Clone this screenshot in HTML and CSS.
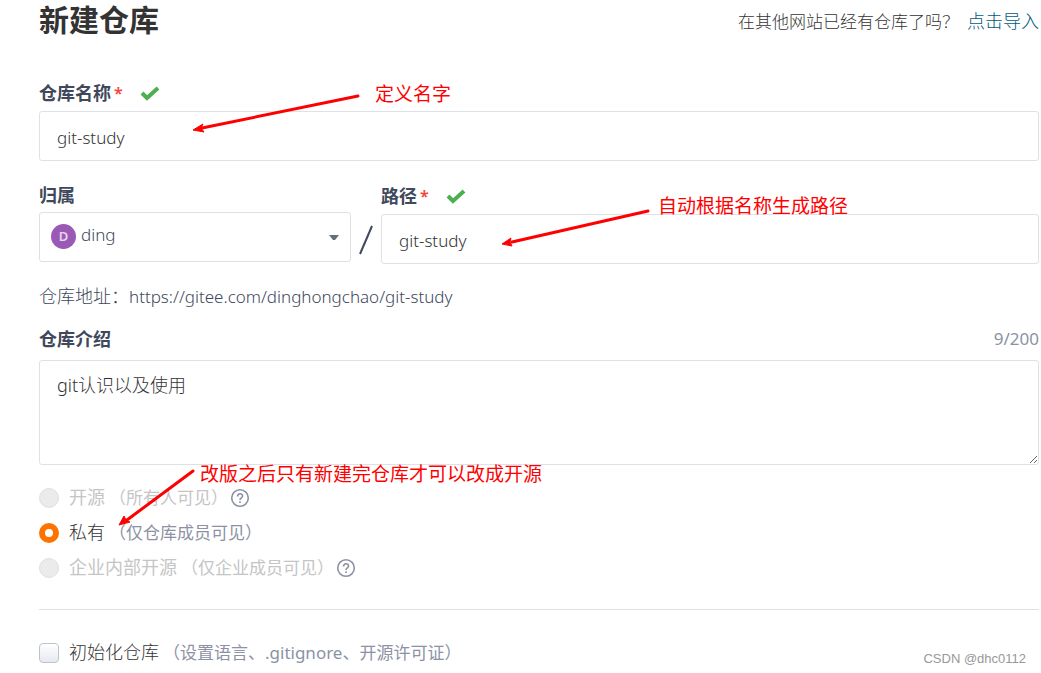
FILE: index.html
```
<!DOCTYPE html>
<html lang="zh-CN">

<head>
    <meta charset="UTF-8">
    <meta name="viewport" content="width=device-width, initial-scale=1.0">
    <title>新建仓库</title>
    <link rel="stylesheet" href="styles.css">
</head>

<body>
    <div class="container">
        <header>
            <h1>新建仓库</h1>
            <p class="import">在其他网站已经有仓库了吗？<a href="#import">点击导入</a></p>
        </header>

        <form>
            <!-- 仓库名称 -->
            <div class="field">
                <div class="label-row">
                    <label for="name">仓库名称</label>
                    <span class="required">*</span>
                    <svg class="check" viewBox="0 0 20 16"><path d="M2 8 L7 13 L18 3"/></svg>
                </div>
                <input type="text" id="name" name="name" value="git-study">
            </div>

            <!-- 归属 / 路径 -->
            <div class="path-row">
                <div class="owner">
                    <div class="label-row">
                        <label for="owner">归属</label>
                    </div>
                    <div class="select-box">
                        <span class="avatar">D</span>
                        <select id="owner" name="owner">
                            <option>ding</option>
                        </select>
                        <svg class="caret" viewBox="0 0 10 6"><path d="M0 0 H10 L6 5 H4 Z"/></svg>
                    </div>
                </div>
                <svg class="slash" viewBox="0 0 14 30"><path d="M1 29 L13 1"/></svg>
                <div class="path">
                    <div class="label-row">
                        <label for="path">路径</label>
                        <span class="required">*</span>
                        <svg class="check" viewBox="0 0 20 16"><path d="M2 8 L7 13 L18 3"/></svg>
                    </div>
                    <input type="text" id="path" name="path" value="git-study">
                </div>
            </div>

            <p class="address">仓库地址：<span class="url">https://gitee.com/dinghongchao/git-study</span></p>

            <!-- 仓库介绍 -->
            <div class="label-row intro">
                <label for="description">仓库介绍</label>
                <span class="count">9/200</span>
            </div>
            <textarea id="description" name="description">git认识以及使用</textarea>

            <!-- 是否开源 -->
            <div class="options">
                <div class="option disabled">
                    <input type="radio" id="public" name="visibility" disabled>
                    <label for="public">开源<span class="hint">（所有人可见）</span></label>
                    <svg class="help" viewBox="0 0 20 20"><circle cx="10" cy="10" r="8.3"/><path d="M7.6 8.4 C7.6 5 12.6 5 12.6 8 C12.6 10 10 9.8 10 12 M10 13.2 V15"/></svg>
                </div>
                <div class="option">
                    <input type="radio" id="private" name="visibility" checked>
                    <label for="private">私有<span class="hint">（仅仓库成员可见）</span></label>
                </div>
                <div class="option disabled">
                    <input type="radio" id="internal" name="visibility" disabled>
                    <label for="internal">企业内部开源<span class="hint">（仅企业成员可见）</span></label>
                    <svg class="help" viewBox="0 0 20 20"><circle cx="10" cy="10" r="8.3"/><path d="M7.6 8.4 C7.6 5 12.6 5 12.6 8 C12.6 10 10 9.8 10 12 M10 13.2 V15"/></svg>
                </div>
            </div>

            <hr>

            <div class="option">
                <input type="checkbox" id="init" name="init">
                <label for="init">初始化仓库<span class="hint">（设置语言、.gitignore、开源许可证）</span></label>
            </div>
        </form>

        <!-- 标注 -->
        <svg class="notes" width="700" height="600">
            <path class="line" d="M358 96 L202 128"/>
            <path class="head" d="M193 130 L203 124 L201 128 L204 132 Z"/>
            <path class="line" d="M648 211 L512 242"/>
            <path class="head" d="M502 244 L511 238 L510 242 L512 246 Z"/>
            <path class="line" d="M193 471 L127 520"/>
            <path class="head" d="M119 525 L124 516 L126 520 L130 522 Z"/>
        </svg>
        <span class="note note-name">定义名字</span>
        <span class="note note-path">自动根据名称生成路径</span>
        <span class="note note-public">改版之后只有新建完仓库才可以改成开源</span>
        <span class="watermark">CSDN @dhc0112</span>
    </div>
</body>

</html>
```
FILE: styles.css
```
* {
    box-sizing: border-box;
}

body {
    margin: 0;
    background-color: #fff;
    color: #40485b;
    font-family: "Noto Sans", "Noto Sans CJK SC", sans-serif;
    font-size: 18px;
    font-weight: 300;
}

.container {
    position: relative;
    padding: 0 2px 0 39px;
}

header {
    display: flex;
    justify-content: space-between;
    align-items: center;
    height: 40px;
    margin-bottom: 35px;
}

h1 {
    margin: 0;
    color: #333;
    font-size: 30px;
    font-weight: 700;
    line-height: 40px;
}

.import {
    margin: 0;
    color: #333;
    font-size: 17px;
}

.import a {
    margin-left: 8px;
    color: #005980;
    font-size: 18px;
    text-decoration: none;
}

.label-row {
    display: flex;
    align-items: center;
    height: 36px;
    font-weight: 700;
    line-height: 36px;
}

.required {
    margin-left: 3px;
    color: #f44336;
    font-size: 16px;
    font-weight: 600;
}

.check {
    width: 20px;
    height: 16px;
    margin-left: 17px;
    fill: none;
    stroke: #4caf50;
    stroke-width: 4;
}

input[type="text"],
select,
textarea {
    display: block;
    width: 100%;
    height: 50px;
    padding: 2px 17px 0;
    border: 1px solid #dfe1e8;
    border-radius: 3px;
    outline: none;
    background-color: #fff;
    color: #333;
    font-family: inherit;
    font-size: 17px;
    font-weight: 300;
}

.path-row {
    display: grid;
    grid-template-columns: 312px 30px 1fr;
    margin-top: 17px;
}

.owner .label-row {
    height: 34px;
}

.select-box {
    position: relative;
}

select {
    padding: 0 30px 5px 41px;
    border-color: #dce1e6;
    color: #40485b;
    appearance: none;
}

.avatar {
    position: absolute;
    top: 12px;
    left: 12px;
    width: 25px;
    height: 25px;
    border-radius: 50%;
    background-color: #9b59b6;
    color: #e6d5ec;
    font-size: 13px;
    font-weight: 600;
    line-height: 25px;
    text-align: center;
}

.caret {
    position: absolute;
    top: 23px;
    right: 12px;
    width: 10px;
    height: 6px;
    fill: #666d7c;
}

.slash {
    width: 14px;
    height: 30px;
    margin: 47px auto 0;
    fill: none;
    stroke: #40485b;
    stroke-width: 2;
}

.address {
    margin: 17px 0 6px;
    line-height: 30px;
}

.url {
    font-size: 17px;
}

.intro {
    justify-content: space-between;
    height: 42px;
}

.count {
    color: #8c92a4;
    font-size: 17px;
    font-weight: 400;
}

textarea {
    height: 105px;
    padding: 10px 17px;
    font-size: 18px;
}

.options {
    margin-top: 15px;
}

.option {
    display: flex;
    align-items: center;
    height: 35px;
    color: #333;
    line-height: 24px;
}

.option label {
    margin-left: 10px;
}

.hint {
    margin-left: 4px;
    color: #8c92a4;
    font-size: 17px;
    font-weight: 400;
}

.disabled,
.disabled .hint {
    color: #c5c5c5;
    font-weight: 400;
}

input[type="radio"],
input[type="checkbox"] {
    width: 20px;
    height: 20px;
    margin: 0;
    border: 1px solid #e0e0e0;
    border-radius: 50%;
    background-color: #ebebeb;
    appearance: none;
}

input[type="radio"]:checked {
    border: 6px solid #fe7300;
    background-color: #fff;
}

input[type="checkbox"] {
    border-color: #c0c3ca;
    border-radius: 4px;
    background: linear-gradient(#fff, #e6e9f0);
}

.help {
    width: 20px;
    height: 20px;
    margin-left: 2px;
    fill: none;
    stroke: #8c92a4;
    stroke-width: 1.6;
}

hr {
    margin: 24px 0 25px;
    border: 0;
    border-top: 1px solid #dfe1e8;
}

/* 标注 */
.notes {
    position: absolute;
    top: 0;
    left: 0;
    pointer-events: none;
}

.line {
    fill: none;
    stroke: #f00;
    stroke-width: 3;
    stroke-linecap: round;
}

.head {
    fill: #f00;
    stroke: #f00;
}

.note {
    position: absolute;
    color: #f00;
    font-size: 19px;
    font-weight: 400;
    line-height: 28px;
}

.note-name {
    top: 80px;
    left: 375px;
}

.note-path {
    top: 192px;
    left: 658px;
}

.note-public {
    top: 460px;
    left: 200px;
}

.watermark {
    position: absolute;
    right: 15px;
    bottom: 4px;
    color: #999;
    font-family: "Liberation Sans", sans-serif;
    font-size: 13px;
    font-weight: 400;
}
```
